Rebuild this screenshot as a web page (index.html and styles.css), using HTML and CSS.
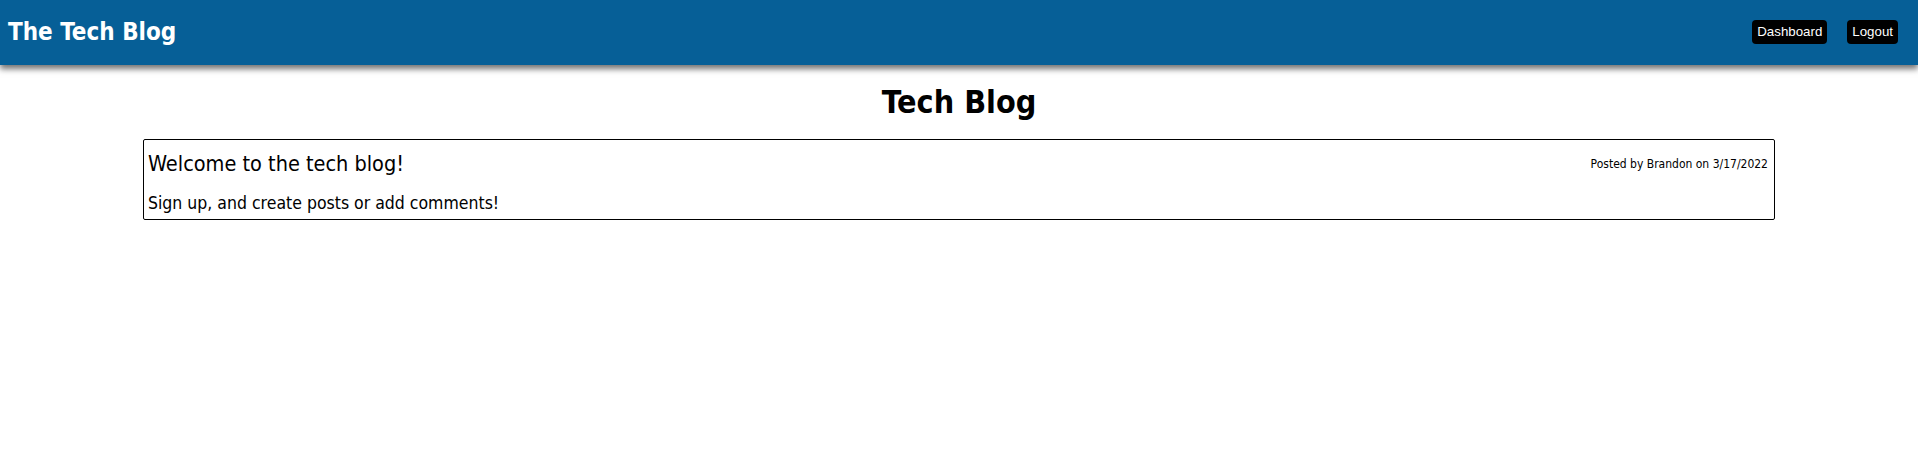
FILE: index.html
```html
<!DOCTYPE html>
<html>
<head>
<meta charset="utf-8">
<link rel="stylesheet" href="styles.css">
</head>
<body>
<header class="topbar">
  <h1 class="brand">The Tech Blog</h1>
  <nav class="nav">
    <a class="btn" href="#">Dashboard</a>
    <a class="btn" href="#">Logout</a>
  </nav>
</header>
<main class="main">
  <h2 class="page-title">Tech Blog</h2>
  <article class="post">
    <div class="post-head">
      <h3 class="post-title">Welcome to the tech blog!</h3>
      <span class="post-meta">Posted by Brandon on 3/17/2022</span>
    </div>
    <p class="post-body">Sign up, and create posts or add comments!</p>
  </article>
</main>
</body>
</html>
```
FILE: styles.css
```css
html, body {
  margin: 0;
  padding: 0;
  background: #fff;
}
body {
  font-family: "DejaVu Sans", Verdana, sans-serif;
  font-stretch: condensed;
  color: #000;
}
.topbar {
  height: 65px;
  background: #065f97;
  box-shadow: 0 4px 6px rgba(0,0,0,0.55);
  display: flex;
  align-items: center;
  justify-content: space-between;
  padding: 0 20px 0 8px;
}
.brand {
  margin: 0;
  color: #fff;
  font-size: 24px;
  font-weight: bold;
  padding-bottom: 2px;
}
.nav {
  display: flex;
  gap: 20px;
  margin-top: -1px;
}
.btn {
  font-family: "Liberation Sans", Arial, sans-serif;
  font-stretch: normal;
  font-size: 13.3px;
  color: #fff;
  background: #000;
  text-decoration: none;
  border-radius: 4px;
  padding: 5px 5px;
  line-height: 14px;
}
.main {
  display: flex;
  flex-direction: column;
  align-items: center;
}
.page-title {
  margin: 17px 0 17px;
  font-size: 32px;
  font-weight: bold;
  line-height: 40px;
}
.post {
  box-sizing: border-box;
  width: 1632px;
  height: 81px;
  border: 1px solid #000;
  border-radius: 2px;
  padding: 10px 6px 0 4px;
}
.post-head {
  display: flex;
  justify-content: space-between;
  align-items: center;
}
.post-title {
  margin: 0;
  font-size: 21.5px;
  font-weight: normal;
  line-height: 28px;
}
.post-meta {
  font-size: 12px;
}
.post-body {
  margin: 14px 0 0;
  font-size: 17.5px;
  line-height: 22px;
}
```
